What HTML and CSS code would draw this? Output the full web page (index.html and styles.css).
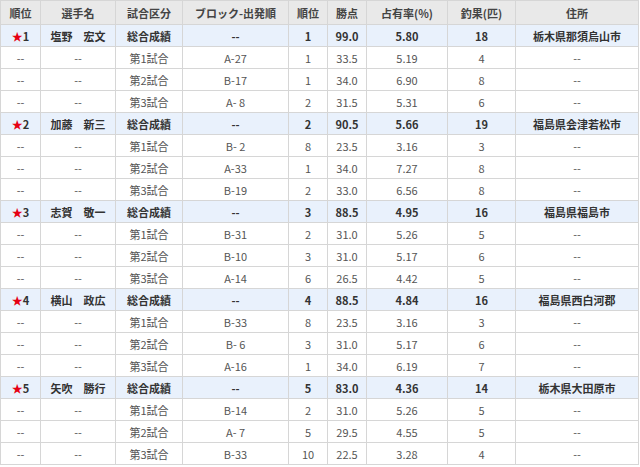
FILE: index.html
```html
<!DOCTYPE html>
<html lang="ja">
<head>
<meta charset="utf-8">
<title>成績</title>
<link rel="stylesheet" href="styles.css">
</head>
<body>
<table class="results">
<colgroup>
<col class="c-rank"><col class="c-name"><col class="c-kind"><col class="c-block"><col class="c-pos"><col class="c-pts"><col class="c-share"><col class="c-catch"><col class="c-addr">
</colgroup>
<thead>
<tr><th>順位</th><th>選手名</th><th>試合区分</th><th>ブロック-出発順</th><th>順位</th><th>勝点</th><th>占有率(%)</th><th>釣果(匹)</th><th>住所</th></tr>
</thead>
<tbody>
<tr class="total"><td><span class="star">★</span>1</td><td>塩野　宏文</td><td>総合成績</td><td>--</td><td>1</td><td>99.0</td><td>5.80</td><td>18</td><td>栃木県那須烏山市</td></tr>
<tr><td>--</td><td>--</td><td>第1試合</td><td>A-27</td><td>1</td><td>33.5</td><td>5.19</td><td>4</td><td>--</td></tr>
<tr><td>--</td><td>--</td><td>第2試合</td><td>B-17</td><td>1</td><td>34.0</td><td>6.90</td><td>8</td><td>--</td></tr>
<tr><td>--</td><td>--</td><td>第3試合</td><td>A-&nbsp;8</td><td>2</td><td>31.5</td><td>5.31</td><td>6</td><td>--</td></tr>
<tr class="total"><td><span class="star">★</span>2</td><td>加藤　新三</td><td>総合成績</td><td>--</td><td>2</td><td>90.5</td><td>5.66</td><td>19</td><td>福島県会津若松市</td></tr>
<tr><td>--</td><td>--</td><td>第1試合</td><td>B-&nbsp;2</td><td>8</td><td>23.5</td><td>3.16</td><td>3</td><td>--</td></tr>
<tr><td>--</td><td>--</td><td>第2試合</td><td>A-33</td><td>1</td><td>34.0</td><td>7.27</td><td>8</td><td>--</td></tr>
<tr><td>--</td><td>--</td><td>第3試合</td><td>B-19</td><td>2</td><td>33.0</td><td>6.56</td><td>8</td><td>--</td></tr>
<tr class="total"><td><span class="star">★</span>3</td><td>志賀　敬一</td><td>総合成績</td><td>--</td><td>3</td><td>88.5</td><td>4.95</td><td>16</td><td>福島県福島市</td></tr>
<tr><td>--</td><td>--</td><td>第1試合</td><td>B-31</td><td>2</td><td>31.0</td><td>5.26</td><td>5</td><td>--</td></tr>
<tr><td>--</td><td>--</td><td>第2試合</td><td>B-10</td><td>3</td><td>31.0</td><td>5.17</td><td>6</td><td>--</td></tr>
<tr><td>--</td><td>--</td><td>第3試合</td><td>A-14</td><td>6</td><td>26.5</td><td>4.42</td><td>5</td><td>--</td></tr>
<tr class="total"><td><span class="star">★</span>4</td><td>横山　政広</td><td>総合成績</td><td>--</td><td>4</td><td>88.5</td><td>4.84</td><td>16</td><td>福島県西白河郡</td></tr>
<tr><td>--</td><td>--</td><td>第1試合</td><td>B-33</td><td>8</td><td>23.5</td><td>3.16</td><td>3</td><td>--</td></tr>
<tr><td>--</td><td>--</td><td>第2試合</td><td>B-&nbsp;6</td><td>3</td><td>31.0</td><td>5.17</td><td>6</td><td>--</td></tr>
<tr><td>--</td><td>--</td><td>第3試合</td><td>A-16</td><td>1</td><td>34.0</td><td>6.19</td><td>7</td><td>--</td></tr>
<tr class="total"><td><span class="star">★</span>5</td><td>矢吹　勝行</td><td>総合成績</td><td>--</td><td>5</td><td>83.0</td><td>4.36</td><td>14</td><td>栃木県大田原市</td></tr>
<tr><td>--</td><td>--</td><td>第1試合</td><td>B-14</td><td>2</td><td>31.0</td><td>5.26</td><td>5</td><td>--</td></tr>
<tr><td>--</td><td>--</td><td>第2試合</td><td>A-&nbsp;7</td><td>5</td><td>29.5</td><td>4.55</td><td>5</td><td>--</td></tr>
<tr><td>--</td><td>--</td><td>第3試合</td><td>B-33</td><td>10</td><td>22.5</td><td>3.28</td><td>4</td><td>--</td></tr>
</tbody>
</table>
</body>
</html>
```
FILE: styles.css
```css
html, body {
  margin: 0;
  padding: 0;
  background: #ffffff;
}
body {
  font-family: "Noto Sans CJK JP", "Noto Sans", sans-serif;
  font-size: 11px;
  color: #555555;
}
.results {
  width: 638px;
  table-layout: fixed;
  border-collapse: collapse;
}
.c-rank { width: 40px; }
.c-name { width: 75px; }
.c-kind { width: 67px; }
.c-block { width: 106px; }
.c-pos { width: 39px; }
.c-pts { width: 39px; }
.c-share { width: 81px; }
.c-catch { width: 68px; }
.c-addr { width: 123px; }
.results th,
.results td {
  border: 1px solid #d6d6d6;
  text-align: center;
  padding: 0;
  white-space: pre;
  line-height: 14px;
}
.results th {
  height: 23px;
  background: #e9e9e9;
  color: #444444;
  font-weight: bold;
}
.results td {
  height: 21px;
}
.results tr.total td {
  background: #e9f1fc;
  color: #333333;
  font-weight: bold;
}
.star {
  color: #e60012;
}
```
